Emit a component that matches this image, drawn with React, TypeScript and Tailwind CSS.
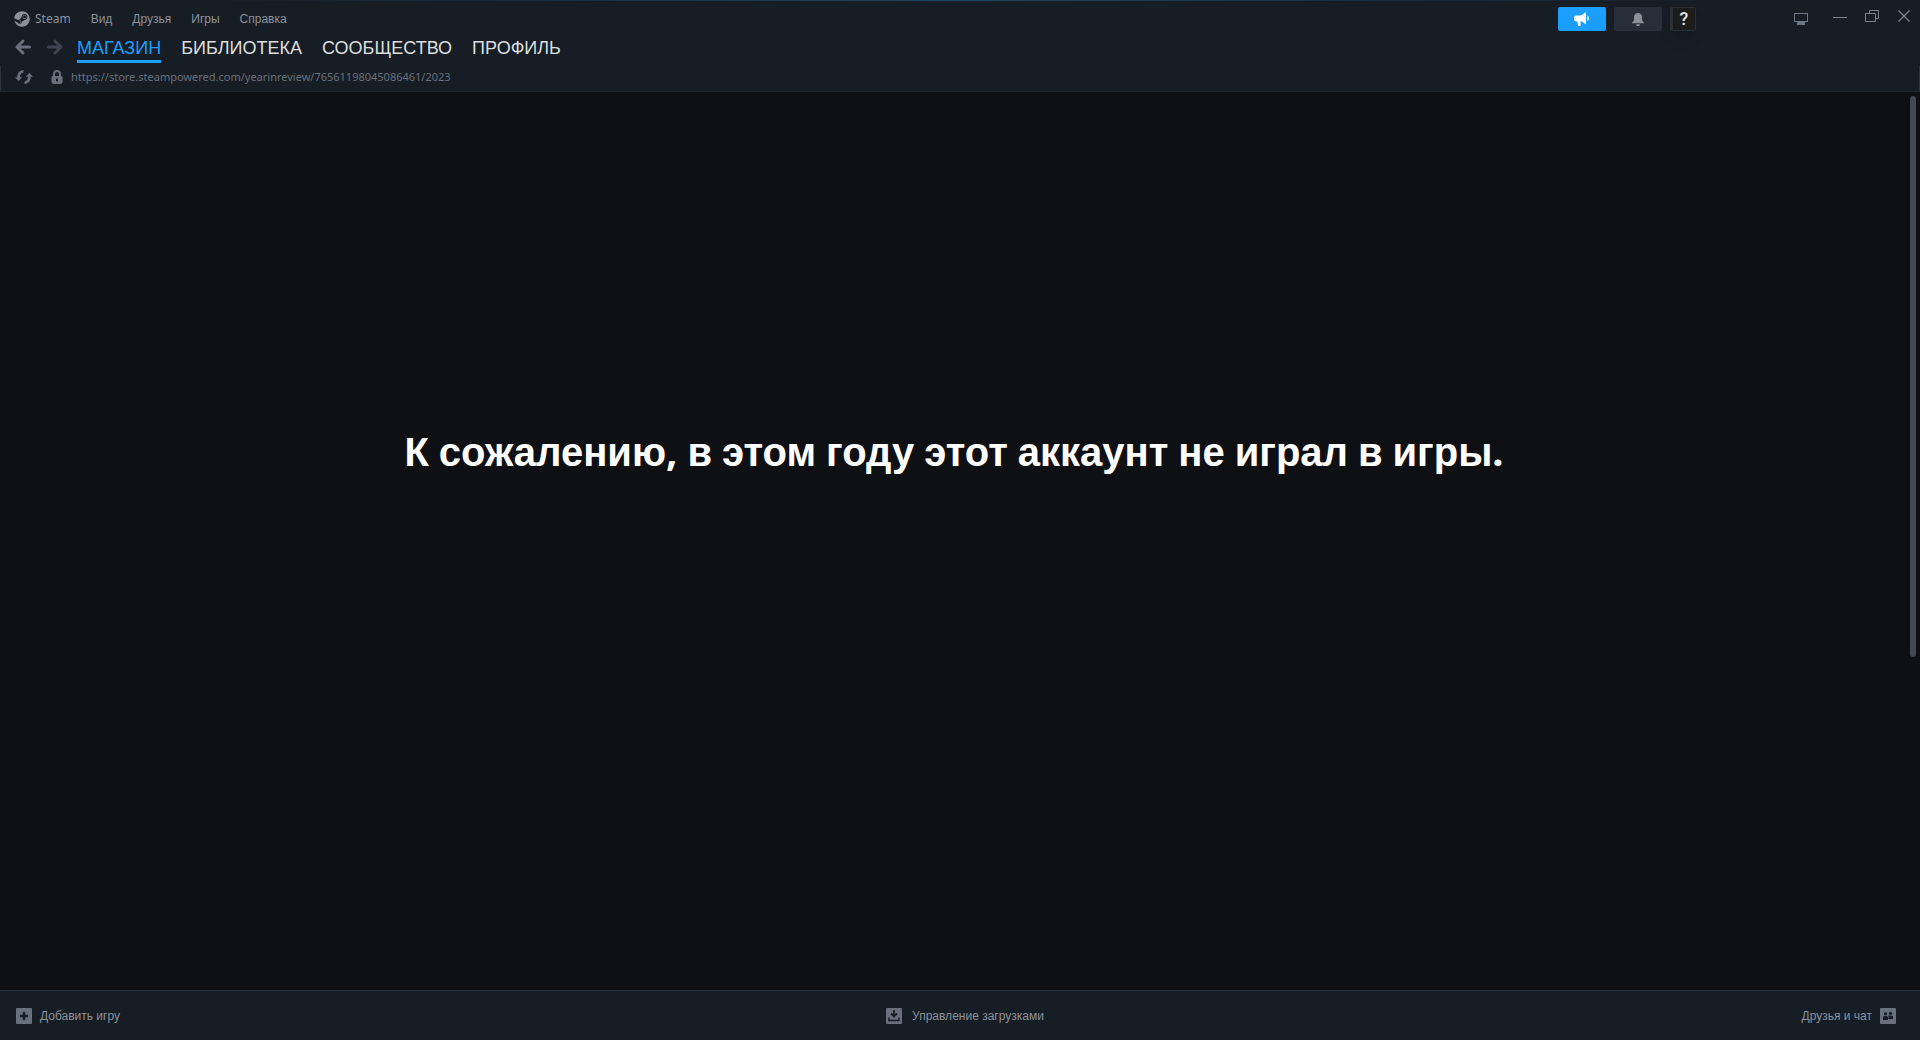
import React, { useState } from 'react';
import { FaSteam } from 'react-icons/fa';

type Tab = 'МАГАЗИН' | 'БИБЛИОТЕКА' | 'СООБЩЕСТВО' | 'ПРОФИЛЬ';

const menuItems = ['Вид', 'Друзья', 'Игры', 'Справка'];
const tabs: Tab[] = ['МАГАЗИН', 'БИБЛИОТЕКА', 'СООБЩЕСТВО', 'ПРОФИЛЬ'];
const message = 'К сожалению, в этом году этот аккаунт не играл в игры.';

const ArrowIcon = ({ className = '' }: { className?: string }) => (
  <svg viewBox="0 0 16 16" className={`w-4 h-4 ${className}`} fill="none" stroke="currentColor" strokeWidth="3" strokeLinecap="round" strokeLinejoin="round">
    <path d="M8 2 2 8l6 6M2.500 8h12" />
  </svg>
);

const RefreshIcon = () => (
  <svg viewBox="0 0 18 14" className="w-[18px] h-[14px]" fill="currentColor">
    <path d="M8.500 0v2.600C5.800 3 4.900 5 5 7.200h2.200L3.600 11 0 7.200h2.300C2.200 3.200 4.400.4 8.500 0Z" />
    <path d="M9.500 14v-2.600c2.700-.4 3.600-2.400 3.500-4.600h-2.200L14.400 3 18 6.800h-2.300c.1 4-2.100 6.800-6.200 7.200Z" />
  </svg>
);

const LockIcon = () => (
  <svg viewBox="0 0 12 14" className="w-3 h-[14px]">
    <path d="M3 7V4a3 3 0 0 1 6 0v3" fill="none" stroke="currentColor" strokeWidth="2" />
    <path fill="currentColor" fillRule="evenodd" d="M1.500 6h9a1 1 0 0 1 1 1v4.500A2.500 2.500 0 0 1 9 14H3A2.500 2.500 0 0 1 .5 11.500V7a1 1 0 0 1 1-1ZM5 8.500v3h2v-3Z" />
  </svg>
);

const MegaphoneIcon = () => (
  <svg viewBox="0 0 16 14" className="w-4 h-[14px]" fill="currentColor">
    <path d="M12 0v12.500L8 9.500H6.500V14H4.200L3.300 9.500H2.500A2.500 2.500 0 0 1 0 7V6a2.500 2.500 0 0 1 2.500-2.500H7Z" />
    <path d="M13.300 3.300A3.500 3.500 0 0 1 13.300 9.200Z" />
  </svg>
);

const BellIcon = () => (
  <svg viewBox="0 0 12 13" className="w-3 h-[13px]" fill="currentColor">
    <path d="M6 0c2.500 0 4 1.700 4 4v3.500L12 9.500v.8H0v-.8l2-2V4c0-2.300 1.500-4 4-4ZM4 11.300h4L7.300 13H4.700Z" />
  </svg>
);

// Spaces and punctuation come from a Latin face, the words from the Cyrillic one
const renderMessage = (text: string) =>
  text.split(/([,.\s])/).map((part, i) => {
    if (part === ' ') return <span key={i} className="font-['Roboto',sans-serif]"> </span>;
    if (part === ',' || part === '.') return <span key={i} className="font-['Noto_Sans',sans-serif]">{part}</span>;
    return part;
  });

const App: React.FC = () => {
  const [activeTab, setActiveTab] = useState<Tab>('МАГАЗИН');

  return (
    <div className="min-h-screen flex flex-col bg-[#0e1014] font-['Liberation_Sans',sans-serif] text-xs text-[#8b929a]">
      <header className="bg-[#171d25] border-b border-[#222b35]">
        <div className="h-px bg-linear-to-r from-[#171d25] from-10% via-[#1b4464] to-[#171d25] to-90%"></div>

        <div className="flex items-start justify-between">
          <nav className="flex items-center gap-5 h-9 pl-[14px]">
            <button className="flex items-center gap-[5px] font-['Noto_Sans',sans-serif]">
              <FaSteam className="w-4 h-4" />
              Steam
            </button>
            {menuItems.map((item) => (
              <button key={item}>{item}</button>
            ))}
          </nav>

          <div className="flex items-start">
            <div className="flex gap-2 pt-[6px]">
              <button aria-label="Новости" className="w-12 h-6 rounded-xs bg-[#1a9fff] text-white flex items-center justify-center">
                <MegaphoneIcon />
              </button>
              <button aria-label="Уведомления" className="w-12 h-6 rounded-xs bg-[#272e38] flex items-center justify-center">
                <BellIcon />
              </button>
              <button aria-label="Аккаунт" className="w-[26px] h-6 rounded-xs border border-l-3 border-[#2b2e33] bg-[#1c1c1c] shadow-lg flex items-center justify-center font-['Roboto',sans-serif] font-medium text-lg text-[#e4e4e4]">
                ?
              </button>
            </div>
            <div className="flex items-start pl-[98px] pr-[10px] pt-[9px] text-[#7b8590]">
              <button aria-label="Режим Big Picture" className="pt-[3px]">
                <svg viewBox="0 0 14 12" className="w-[14px] h-3" fill="#6d7683">
                  <path fillRule="evenodd" d="M0 0h14v9H0ZM1 1v7h12V1ZM3 9h8v3H3Z" />
                </svg>
              </button>
              <button aria-label="Свернуть" className="ml-[25px] w-[14px] h-[14px] flex items-center">
                <span className="w-full h-px bg-[#7b8590]"></span>
              </button>
              <button aria-label="Развернуть" className="ml-[18px]">
                <svg viewBox="0 0 14 12" className="w-[14px] h-3" fill="none" stroke="currentColor">
                  <path d="M.5 3.500h10v8H.5ZM4.500 3V.5h9v8H11" />
                </svg>
              </button>
              <button aria-label="Закрыть" className="ml-[19px]">
                <svg viewBox="0 0 12 12" className="w-3 h-3" fill="none" stroke="currentColor" strokeWidth="1.300">
                  <path d="M.5.5l11 11M11.500.5l-11 11" />
                </svg>
              </button>
            </div>
          </div>
        </div>

        <div className="flex items-start h-[29px] pl-[15px]">
          <div className="flex gap-4 pt-[2px] text-[#67707b]">
            <button aria-label="Назад"><ArrowIcon /></button>
            <button aria-label="Вперёд" className="text-[#3d4450]"><ArrowIcon className="rotate-180" /></button>
          </div>
          <nav className="flex gap-5 pl-[14px] text-lg leading-[23px]">
            {tabs.map((tab) => (
              <button
                key={tab}
                onClick={() => setActiveTab(tab)}
                className={`h-[26px] border-b-3 ${tab === activeTab ? 'text-[#1a9fff] border-[#1a9fff]' : 'text-[#dcdedf] border-transparent'}`}
              >
                {tab}
              </button>
            ))}
          </nav>
        </div>

        <div className="flex items-center h-[25px] pb-[3px] pl-[14px] border-x border-[#2a333e] text-[#67707b]">
          <button aria-label="Обновить"><RefreshIcon /></button>
          <span className="ml-[18px]"><LockIcon /></span>
          <span className="ml-2 font-['Noto_Sans',sans-serif] text-[11px]">https://store.steampowered.com/yearinreview/76561198045086461/2023</span>
        </div>
      </header>

      <main className="flex-1 flex">
        <div className="flex-1 flex justify-center pt-[329px]">
          <h1 className="text-[40px] leading-[60px] font-bold text-white">{renderMessage(message)}</h1>
        </div>
        <div className="w-3 pt-1 pl-[2px] flex flex-col">
          <div className="w-[6px] h-[62.8%] rounded-full bg-[#434953]"></div>
        </div>
      </main>

      <footer className="h-[50px] border-t border-[#2f3440] bg-[#171d25] grid grid-cols-3 items-center px-4">
        <button className="flex items-center gap-2 justify-self-start">
          <svg viewBox="0 0 16 16" className="w-4 h-4">
            <rect width="16" height="16" rx="1" fill="#67707b" />
            <path d="M8 4v8M4 8h8" stroke="#171d25" strokeWidth="2.500" />
          </svg>
          Добавить игру
        </button>
        <button className="flex items-center gap-[10px] justify-self-center ml-[10px]">
          <svg viewBox="0 0 16 16" className="w-4 h-4">
            <rect width="16" height="16" rx="1" fill="#67707b" />
            <path d="M8 2v6M5 5.500l3 3 3-3" stroke="#171d25" strokeWidth="1.800" fill="none" />
            <path d="M3 9.500v3h10v-3" stroke="#171d25" strokeWidth="1.500" fill="none" />
          </svg>
          Управление загрузками
        </button>
        <button className="flex items-center gap-2 justify-self-end mr-2">
          Друзья и чат
          <svg viewBox="0 0 16 16" className="w-4 h-4">
            <rect width="16" height="16" rx="1" fill="#67707b" />
            <g fill="#171d25">
              <circle cx="5.500" cy="5.800" r="1.600" />
              <circle cx="10.500" cy="5.300" r="1.600" />
              <path d="M3 12V9.500Q3 8 4.500 8h2Q8 8 8 9.500V12ZM8.500 11V7.500h3q1.500 0 1.500 1.500v2Z" />
            </g>
          </svg>
        </button>
      </footer>
    </div>
  );
};

export default App;
